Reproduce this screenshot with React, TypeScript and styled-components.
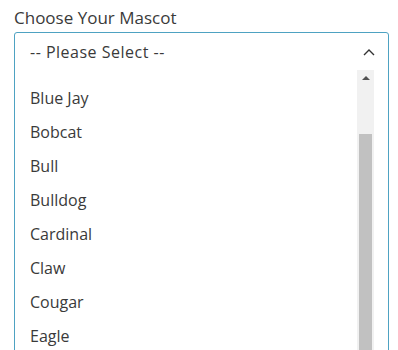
import React from 'react'
import styled, { createGlobalStyle } from 'styled-components'

const GlobalStyle = createGlobalStyle`
    html, body {
        margin: 0;
        padding: 0;
        background: #ffffff;
        font-family: "Open Sans", "Liberation Sans", sans-serif;
        color: #333333;
    }
`

const Page = styled.div`
    width: 398px;
    height: 350px;
    overflow: hidden;
    padding: 6px 9px 0 14px;
    box-sizing: border-box;
`

const Label = styled.div`
    font-size: 17px;
    line-height: 24px;
    color: #3a3a3a;
    margin-bottom: 2px;
`

const SelectBox = styled.div`
    border: 1px solid #4ea2c2;
    border-radius: 3px;
    height: 340px;
    display: flex;
    flex-direction: column;
`

const Header = styled.div`
    height: 37px;
    display: flex;
    align-items: center;
    justify-content: space-between;
    padding: 0 13px 0 15px;
    font-size: 16px;
    letter-spacing: 0.5px;
    color: #3a3a3a;
`

const Body = styled.div`
    flex: 1;
    display: flex;
    padding-right: 14px;
`

const List = styled.ul`
    flex: 1;
    list-style: none;
    margin: 0;
    padding: 11px 0 0 15px;
`

const Item = styled.li`
    height: 34px;
    line-height: 34px;
    font-size: 16px;
    color: #3a3a3a;
`

const Track = styled.div`
    width: 17px;
    background: #f1f1f1;
    display: flex;
    flex-direction: column;
    align-items: center;
`

const ArrowUp = styled.div`
    margin-top: 6px;
    width: 0;
    height: 0;
    border-left: 4px solid transparent;
    border-right: 4px solid transparent;
    border-bottom: 4px solid #505050;
`

const Thumb = styled.div<{ $offset: number }>`
    margin-top: ${p => p.$offset}px;
    width: 13px;
    flex: 1;
    background: #c1c1c1;
`

const Chevron = () => (
    <svg width="12" height="8" viewBox="0 0 12 8" fill="none">
        <path d="M1 7 L6 2 L11 7" stroke="#333" strokeWidth="1.4" />
    </svg>
)

const mascots = ['Blue Jay', 'Bobcat', 'Bull', 'Bulldog', 'Cardinal', 'Claw', 'Cougar', 'Eagle']

export default function App() {
    return (
        <Page>
            <GlobalStyle />
            <Label>Choose Your Mascot</Label>
            <SelectBox>
                <Header>
                    <span>-- Please Select --</span>
                    <Chevron />
                </Header>
                <Body>
                    <List>
                        {mascots.map(m => <Item key={m}>{m}</Item>)}
                    </List>
                    <Track>
                        <ArrowUp />
                        <Thumb $offset={54} />
                    </Track>
                </Body>
            </SelectBox>
        </Page>
    )
}
